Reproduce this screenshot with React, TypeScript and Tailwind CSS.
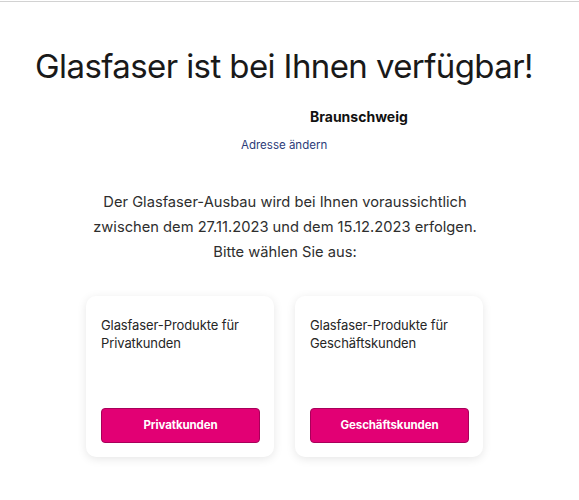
import React from "react";

function Card({ title, button }: { title: string[]; button: string }) {
  return (
    <div className="w-[188px] h-[161px] rounded-[10px] bg-white shadow-[0_2px_10px_rgba(0,0,0,0.10)] px-[15px] pt-[20px] pb-[14px] flex flex-col justify-between">
      <p className="text-[13px] leading-[18px] text-[#262626] tracking-[-0.1px]">
        {title[0]}
        <br />
        {title[1]}
      </p>
      <button className="h-[35px] w-[159px] rounded-[4px] bg-[#e20074] border border-[#a8005a] text-white text-[11.5px] font-bold tracking-[-0.1px]">
        {button}
      </button>
    </div>
  );
}

export default function App() {
  return (
    <div className="w-[579px] h-[500px] bg-white overflow-hidden" style={{ fontFamily: "Inter, 'Noto Sans', sans-serif" }}>
      <div className="h-[1px] mt-[1px] bg-[#d2d2d2]" />
      <h1 className="mt-[42px] pr-[11px] text-center text-[33px] leading-[44px] text-[#191919] tracking-[-0.6px]">
        Glasfaser ist bei Ihnen verfügbar!
      </h1>
      <div className="mt-[20px] pl-[310px] text-[14px] leading-[18px] font-bold text-[#111]">Braunschweig</div>
      <div className="mt-[11px] pl-[241px] text-[11.5px] leading-[16px] text-[#2c3b78]">Adresse ändern</div>
      <p className="mt-[37px] pr-[9px] text-center text-[14.7px] leading-[25px] text-[#2e2e2e]">
        Der Glasfaser-Ausbau wird bei Ihnen voraussichtlich
        <br />
        zwischen dem 27.11.2023 und dem 15.12.2023 erfolgen.
        <br />
        Bitte wählen Sie aus:
      </p>
      <div className="mt-[31px] pl-[86px] flex gap-[21px]">
        <Card title={["Glasfaser-Produkte für", "Privatkunden"]} button="Privatkunden" />
        <Card title={["Glasfaser-Produkte für", "Geschäftskunden"]} button="Geschäftskunden" />
      </div>
    </div>
  );
}
